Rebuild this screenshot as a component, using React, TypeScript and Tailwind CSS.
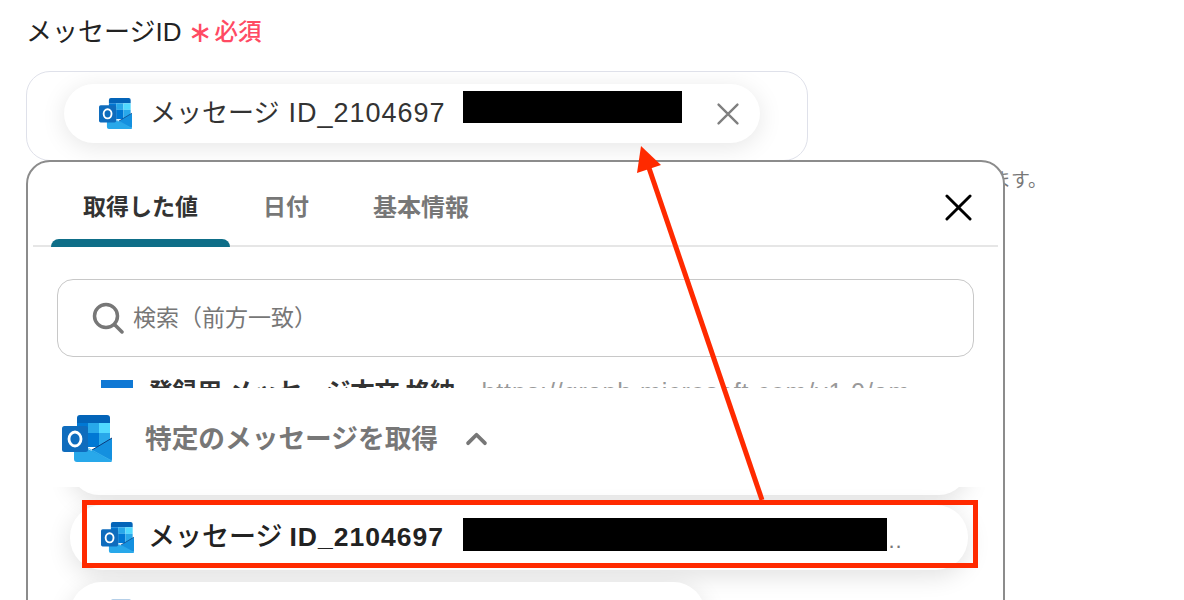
const OutlookIcon = ({ className }: { className: string }) => (
  <svg viewBox="0 0 50 47" className={className}>
    <path d="M18 0h27a3 3 0 0 1 3 3v5H15V3a3 3 0 0 1 3-3z" fill="#0364b8" />
    <rect x="15" y="8" width="11" height="10" fill="#0078d4" />
    <rect x="26" y="8" width="11" height="10" fill="#28a8ea" />
    <rect x="37" y="8" width="11" height="10" fill="#50d9ff" />
    <rect x="15" y="18" width="11" height="14" fill="#0a5aa8" />
    <rect x="26" y="18" width="11" height="14" fill="#0078d4" />
    <rect x="37" y="18" width="11" height="14" fill="#28a8ea" />
    <path d="M50 23L30 35l-4 9 21 3a3 3 0 0 0 3-3z" fill="#1490df" />
    <path d="M12 27L50 46a3 3 0 0 1-3 1H15a3 3 0 0 1-3-3z" fill="#28a8ea" />
    <path d="M50 23L30 35" stroke="#0a3a7a" strokeWidth="1" />
    <path d="M26 33L50 46" stroke="#3fb5ee" strokeWidth="0.8" />
    <rect x="0" y="11" width="26" height="26" rx="2.5" fill="#0f6cbd" />
    <ellipse cx="13" cy="24" rx="6" ry="7" fill="none" stroke="#fff" strokeWidth="2.8" />
  </svg>
);

const CloseIcon = ({ className }: { className: string }) => (
  <svg viewBox="0 0 28 28" className={className} fill="none" stroke="currentColor" strokeLinecap="round">
    <path d="M2 2l24 24M26 2L2 26" strokeWidth="3" />
  </svg>
);

const App = () => {
  return (
    <div className="relative h-[600px] overflow-hidden bg-white pl-[26px] pt-[16px] font-['Liberation_Sans','Noto_Sans_CJK_JP',sans-serif] text-[#222]">
      <div className="flex h-[32px] items-center">
        <span className="text-[26px]">メッセージID</span>
        <span className="ml-[7px] text-[29px] leading-none text-[#ff4a63]">∗</span>
        <span className="ml-[2px] mt-[2px] text-[23.5px] font-medium text-[#ff4a63]">必須</span>
      </div>

      <div className="mt-[23px] flex h-[90px] w-[782px] items-start overflow-hidden rounded-[24px] border border-[#dfe1ea] pl-[37px] pt-[12px]">
        <div className="flex h-[59px] w-[696px] items-center rounded-[30px] bg-white pl-[35px] shadow-[0_4px_24px_rgba(0,0,0,0.1)]">
          <OutlookIcon className="h-[31px] w-[33px]" />
          <span className="ml-[18px] text-[26px] whitespace-nowrap text-[#333]">メッセージ</span>
          <span className="ml-[9px] text-[27px] tracking-[1px] whitespace-nowrap text-[#333]">ID_2104697</span>
          <CloseIcon className="ml-auto mr-[21px] h-[22px] w-[22px] text-[#808080]" />
        </div>
      </div>

      <p className="mt-[6px] w-[1021px] text-right text-[19px] text-[#777]">ます。</p>

      {/* value picker popup */}
      <div className="isolate absolute left-[26px] top-[160px] h-[470px] w-[979px] overflow-hidden rounded-t-[24px] border-2 border-[#8c8c8c] bg-white">
        <div className="relative mx-[5px] flex h-[85px] items-start border-b-2 border-[#e6e6e6] pl-[50px] pt-[28px] text-[23px] font-bold text-[#777]">
          <span className="text-[#333]">取得した値</span>
          <span className="ml-[65px]">日付</span>
          <span className="ml-[64px] text-[24px]">基本情報</span>
          <div className="absolute bottom-[-2px] left-[18px] h-[8px] w-[179px] rounded-t-[8px] bg-[#0e6e88]" />
          <CloseIcon className="absolute right-[26px] top-[32px] h-[27px] w-[27px] text-black" />
        </div>

        <div className="mx-[29px] mt-[32px] flex h-[78px] w-[917px] items-center rounded-[16px] border border-[#c8c8c8] pl-[34px]">
          <svg viewBox="0 0 32 32" className="h-[32px] w-[32px] text-[#777]" fill="none" stroke="currentColor" strokeWidth="3.5" strokeLinecap="round">
            <circle cx="14" cy="14" r="11.5" />
            <path d="M23 23l7 7" />
          </svg>
          <span className="ml-[9px] text-[23px] text-[#777]">検索（前方一致）</span>
        </div>

        {/* list row scrolled out under the section header */}
        <div className="relative h-[31px] overflow-hidden">
          <div className="absolute left-[73px] top-[23px] h-[30px] w-[32px] bg-[#0f78d4]" />
          <div className="absolute left-[120px] top-[17px] flex items-center whitespace-nowrap">
            <span className="text-[25px] font-bold tracking-[-0.5px] text-[#333]">登録用 メッセージ本文 格納</span>
            <span className="ml-[27px] text-[25px] tracking-[0.9px] text-[#999]">https://graph.microsoft.com/v1.0/am...</span>
          </div>
        </div>

        <div className="relative z-10 mx-[7px] flex h-[99px] items-center bg-white pl-[27px] pt-[2px]">
          <OutlookIcon className="h-[47px] w-[50px]" />
          <span className="ml-[33px] mt-[1px] text-[26.7px] font-bold text-[#777]">特定のメッセージを取得</span>
          <svg viewBox="0 0 24 16" className="ml-[27px] h-[15px] w-[23px] text-[#777]" fill="none" stroke="currentColor" strokeWidth="4" strokeLinecap="round" strokeLinejoin="round">
            <path d="M3 13l9-9 9 9" />
          </svg>
        </div>

        <div className="mx-[42px] -mt-[50px] h-[58px] w-[898px] rounded-[30px] bg-white shadow-[0_6px_24px_rgba(0,0,0,0.12)]" />

        <div className="mx-[42px] mt-[10px] flex h-[65px] w-[898px] items-center rounded-[32px] bg-white pl-[31px] shadow-[0_6px_24px_rgba(0,0,0,0.12)]">
          <OutlookIcon className="h-[31px] w-[33px]" />
          <span className="ml-[14px] text-[27px] font-medium whitespace-nowrap text-[#222]">メッセージ</span>
          <span className="ml-[7px] w-[153px] text-[26.5px] font-semibold tracking-[1px] whitespace-nowrap text-[#222]">ID_2104697</span>
          <span className="ml-[446px] self-end pb-[18px] text-[22px] leading-none tracking-[1px] text-[#777]">..</span>
        </div>

        <div className="mx-[42px] mt-[12px] h-[63px] w-[635px] rounded-[32px] bg-white pl-[41px] pt-[17px] shadow-[0_6px_24px_rgba(0,0,0,0.12)]">
          <div className="h-[30px] w-[20px] rounded-[2px] bg-[#b5cfe8]" />
        </div>
      </div>

      {/* redaction bars and annotations laid over the screenshot */}
      <div className="absolute left-[463px] top-[91px] h-[32px] w-[219px] bg-black" />
      <div className="absolute left-[463px] top-[518px] h-[33px] w-[424px] bg-black" />
      <div className="absolute left-[82px] top-[500px] h-[68px] w-[896px] border-[5px] border-[#ff2a00]" />
      <svg viewBox="0 0 1184 600" className="pointer-events-none absolute left-0 top-0 h-[600px] w-[1184px]">
        <path d="M762 500L649 168" stroke="#ff2a00" strokeWidth="5" fill="none" />
        <path d="M641 146L637 173L661 165z" fill="#ff2a00" />
      </svg>
    </div>
  );
};

export default App;
